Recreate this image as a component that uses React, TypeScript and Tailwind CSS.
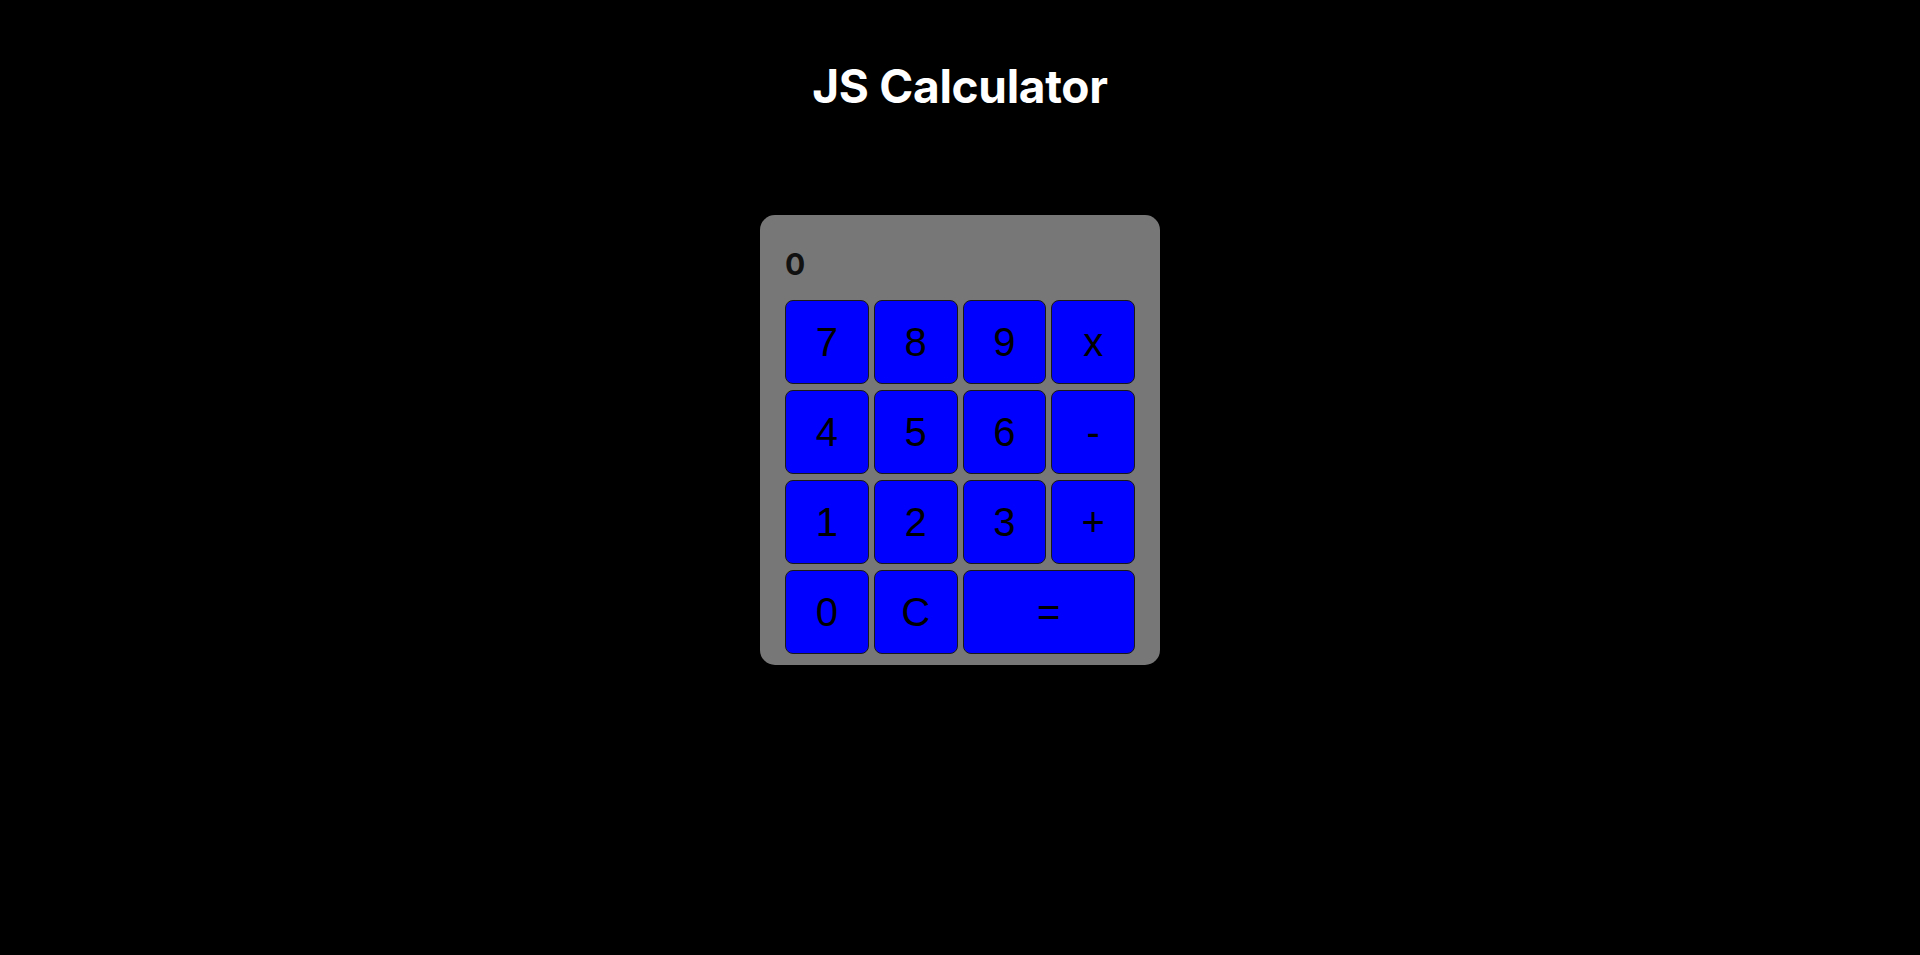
import { useState } from "react"

const keys: { label: string; wide?: boolean }[] = [
  { label: "7" },
  { label: "8" },
  { label: "9" },
  { label: "x" },
  { label: "4" },
  { label: "5" },
  { label: "6" },
  { label: "-" },
  { label: "1" },
  { label: "2" },
  { label: "3" },
  { label: "+" },
  { label: "0" },
  { label: "C" },
  { label: "=", wide: true },
]

export default function App() {
  const [display, setDisplay] = useState("0")

  const press = (k: string) => {
    if (k === "C") return setDisplay("0")
    if (k === "=") {
      try {
        // eslint-disable-next-line no-new-func
        const v = Function(`return (${display.replace(/x/g, "*")})`)()
        setDisplay(String(v))
      } catch {
        setDisplay("0")
      }
      return
    }
    setDisplay((d) => (d === "0" && /\d/.test(k) ? k : d + k))
  }

  return (
    <div className="min-h-[955px] w-full bg-black flex flex-col items-center">
      <h1 className="mt-[58px] text-white text-[46px] font-bold leading-[56px] tracking-[-0.3px] font-['Inter',sans-serif]">
        JS Calculator
      </h1>

      <div className="mt-[101px] w-[400px] h-[450px] rounded-[15px] bg-[#777777] px-[25px] pt-[25px] pb-[11px] flex flex-col">
        <div className="h-[60px] text-[#111111] text-[30px] font-bold font-['Inter',sans-serif] leading-[48px]">
          {display}
        </div>
        <div className="grid grid-cols-4 gap-x-[5px] gap-y-[6px] auto-rows-[84px]">
          {keys.map((k) => (
            <button
              key={k.label}
              onClick={() => press(k.label)}
              className={`${k.wide ? "col-span-2" : ""} bg-[#0000ff] border border-[#1a1a1a] rounded-[8px] text-black text-[40px] font-['Liberation_Sans',Arial,sans-serif] flex items-center justify-center`}
            >
              {k.label}
            </button>
          ))}
        </div>
      </div>
    </div>
  )
}
